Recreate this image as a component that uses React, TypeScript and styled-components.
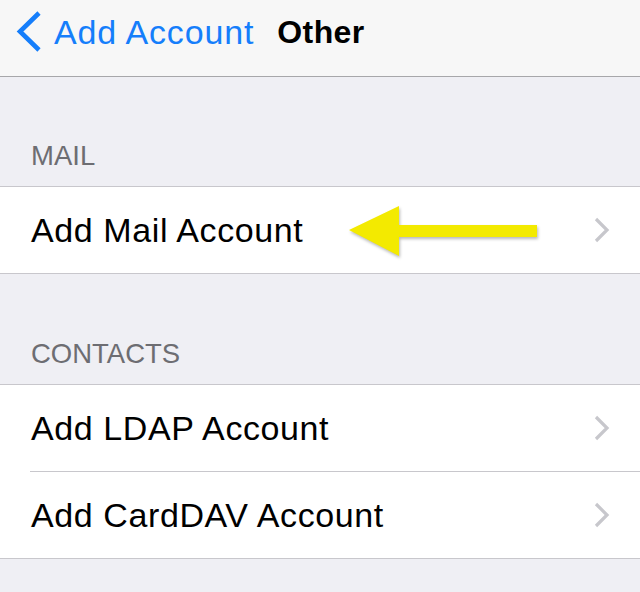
import React, { FC } from "react";
import styled, { createGlobalStyle } from "styled-components";

const GlobalStyle = createGlobalStyle`
  html, body {
    margin: 0;
    padding: 0;
    background: #efeff4;
  }
  body {
    font-family: "Liberation Sans", Arial, sans-serif;
    -webkit-font-smoothing: antialiased;
  }
`;

const BackChevron: FC = () => (
  <svg width="26" height="44" viewBox="0 0 26 44">
    <polyline
      points="24,3 5,21.5 24,40"
      fill="none"
      stroke="#157efb"
      strokeWidth="4.6"
      strokeLinejoin="miter"
    />
  </svg>
);

const Disclosure: FC = () => (
  <svg width="16" height="26" viewBox="0 0 16 26">
    <polyline
      points="2,2 13,13 2,24"
      fill="none"
      stroke="#c7c7cc"
      strokeWidth="3.2"
      strokeLinejoin="miter"
    />
  </svg>
);

const Arrow: FC = () => (
  <ArrowMark width="200" height="62" viewBox="0 0 200 62">
    <polygon
      points="4,30 54,6 54,25 192,25 192,37 54,37 54,56"
      fill="#f3ea00"
    />
  </ArrowMark>
);

type Item = { label: string; marked?: boolean };
type Section = { title: string; gap: number; items: Item[] };

const sections: Section[] = [
  { title: "MAIL", gap: 109, items: [{ label: "Add Mail Account", marked: true }] },
  {
    title: "CONTACTS",
    gap: 110,
    items: [{ label: "Add LDAP Account" }, { label: "Add CardDAV Account" }],
  },
];

const App: FC = () => (
  <Page>
    <GlobalStyle />
    <NavBar>
      <BackButton>
        <BackChevron />
        <span>Add Account</span>
      </BackButton>
      <Title>Other</Title>
    </NavBar>
    {sections.map((section) => (
      <React.Fragment key={section.title}>
        <SectionHeader $height={section.gap}>{section.title}</SectionHeader>
        <Group>
          {section.items.map((item, i) => (
            <React.Fragment key={item.label}>
              {i > 0 && <Divider />}
              <Row>
                <RowLabel>{item.label}</RowLabel>
                {item.marked && <Arrow />}
                <Disclosure />
              </Row>
            </React.Fragment>
          ))}
        </Group>
      </React.Fragment>
    ))}
  </Page>
);

const Page = styled.div`
  width: 640px;
  min-height: 592px;
  background: #efeff4;
`;

const NavBar = styled.header`
  height: 77px;
  box-sizing: border-box;
  display: flex;
  align-items: center;
  padding: 0 0 12px 15px;
  background: #f7f7f7;
  border-bottom: 1px solid #a7a7aa;
`;

const BackButton = styled.div`
  display: flex;
  align-items: center;
  gap: 13px;
  color: #157efb;
  font-size: 34px;
  letter-spacing: 0.85px;
  line-height: 40px;
`;

const Title = styled.div`
  margin-left: 23px;
  font-size: 32px;
  font-weight: bold;
  letter-spacing: 0.4px;
  line-height: 40px;
  color: #000;
`;

const SectionHeader = styled.div<{ $height: number }>`
  height: ${(p) => p.$height}px;
  box-sizing: border-box;
  display: flex;
  align-items: flex-end;
  padding: 0 0 14px 31px;
  font-size: 27.5px;
  line-height: 32px;
  color: #6d6d72;
`;

const Group = styled.div`
  background: #fff;
  border-top: 1px solid #c8c7cc;
  border-bottom: 1px solid #c8c7cc;
`;

const Row = styled.div`
  position: relative;
  height: 86px;
  display: flex;
  align-items: center;
  justify-content: space-between;
  padding: 0 30px 0 31px;
`;

const RowLabel = styled.span`
  font-size: 34px;
  letter-spacing: 0.6px;
  line-height: 40px;
  color: #000;
`;

const Divider = styled.div`
  height: 1px;
  margin-left: 30px;
  background: #c8c7cc;
`;

const ArrowMark = styled.svg`
  position: absolute;
  left: 345px;
  top: 13px;
  filter: drop-shadow(1px 2px 1.5px rgba(0, 0, 0, 0.28));
`;

export default App;
